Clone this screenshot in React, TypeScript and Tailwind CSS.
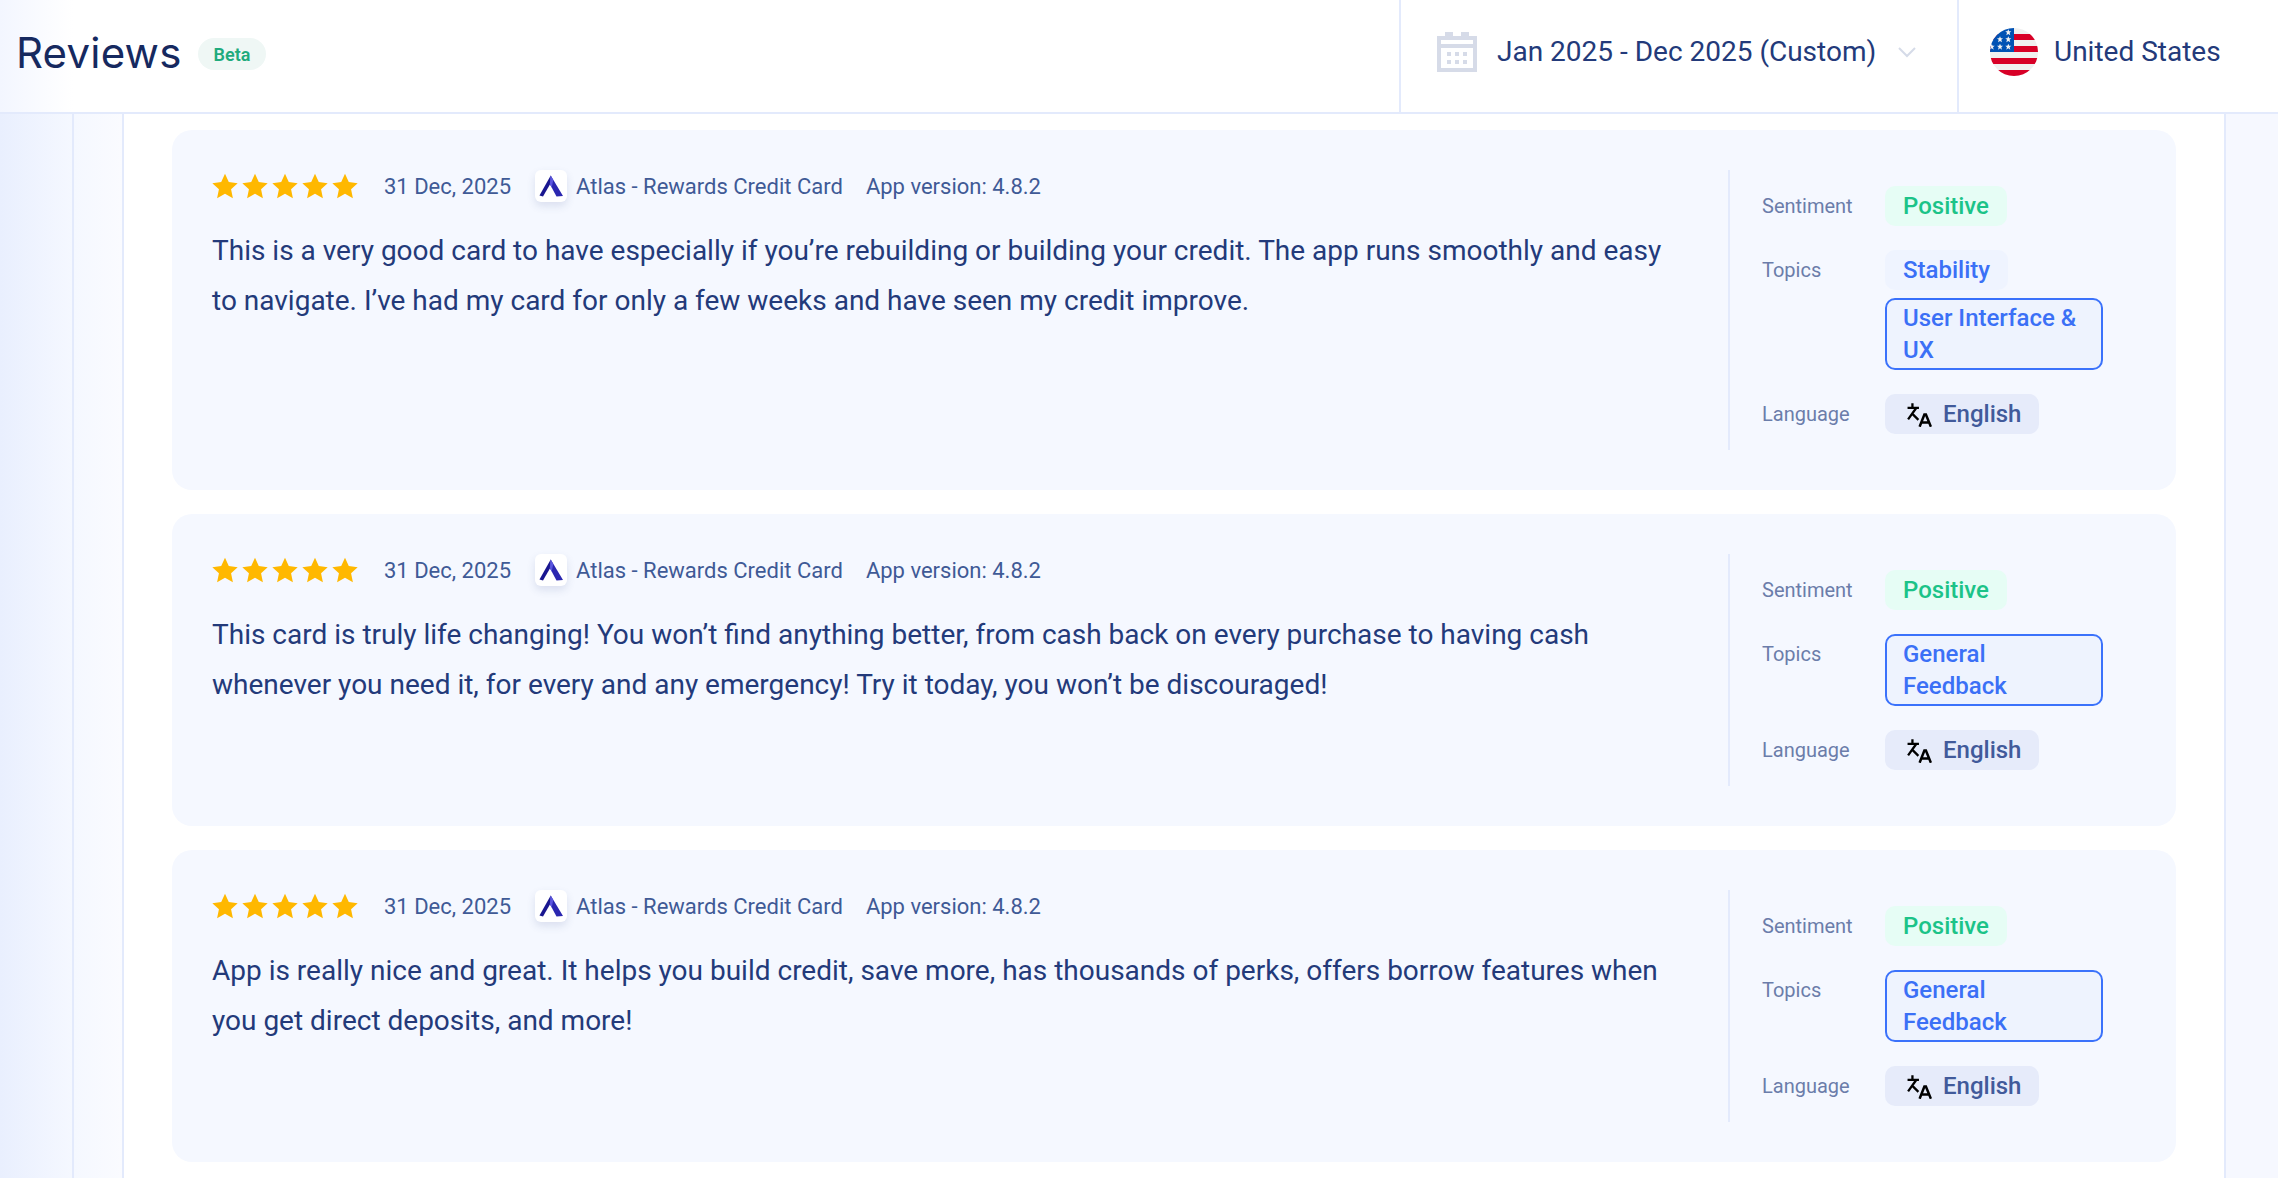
import React from "react";

function Star() {
  return (
    <svg viewBox="0 0 24 24" className="w-[26px] h-[26px]" fill="#ffb800">
      <path d="M12 .8l3.5 7.6 8.2 1-6.1 5.6 1.7 8.2L12 19.1l-7.3 4.1 1.7-8.2L.3 9.4l8.2-1z" />
    </svg>
  );
}

function Logo() {
  return (
    <div className="w-8 h-8 rounded-md bg-white shadow-[0_4px_8px_rgba(60,80,140,0.14)] flex items-center justify-center shrink-0">
      <svg viewBox="0 0 32 32" className="w-8 h-8">
        <path d="M15.7 5.5L28 26l-6.5.5L14.8 14z" fill="#2b27b0" />
        <path d="M15.7 5.5L4.5 25.5 8 26.5 15.2 14z" fill="#191690" />
        <path d="M15.7 5.5l2.6 4.4-1.6 7.6-1.9-3.5z" fill="#5a55e0" />
      </svg>
    </div>
  );
}

function TranslateIcon() {
  return (
    <svg viewBox="0 0 23 23" className="w-[25px] h-[25px] shrink-0 -ml-px -mr-px" fill="none" stroke="#000" strokeWidth="2.1">
      <path d="M5 1.2v3.6M.5 5.5H11M8.5 5.5L1 16M5.2 11.2l5.3 5.2" />
      <path d="M11.6 22.8L16 11.5h1.4L22 22.8M13.4 18.8h7" strokeWidth="2.3" />
    </svg>
  );
}

function CalendarIcon() {
  return (
    <svg viewBox="0 0 40 40" className="w-10 h-10" fill="#d6dbe8">
      <path
        fillRule="evenodd"
        d="M8 0h8v4h8V0h8v4h8v36H0V4h8zM4 8v4h32V8zM4 16v20h32V16z"
      />
      <rect x="10" y="20" width="4" height="4" />
      <rect x="18" y="20" width="4" height="4" />
      <rect x="26" y="20" width="4" height="4" />
      <rect x="10" y="28" width="4" height="4" />
      <rect x="18" y="28" width="4" height="4" />
      <rect x="26" y="28" width="4" height="4" />
    </svg>
  );
}

function Flag() {
  const stars: [number, number][] = [
    [18.3, 4.3], [10, 11.3], [18.3, 11.3], [1.7, 18.7], [10, 18.7], [18.3, 18.7],
  ];
  return (
    <svg viewBox="0 0 48 48" className="w-12 h-12 shrink-0">
      <defs>
        <clipPath id="flagClip">
          <circle cx="24" cy="24" r="24" />
        </clipPath>
      </defs>
      <g clipPath="url(#flagClip)">
        <rect width="48" height="48" fill="#f0f0f0" />
        <rect y="6" width="48" height="6" fill="#d80027" />
        <rect y="18" width="48" height="6" fill="#d80027" />
        <rect y="30" width="48" height="6" fill="#d80027" />
        <rect y="42" width="48" height="6" fill="#d80027" />
        <rect width="24" height="24" fill="#0052b4" />
        {stars.map(([x, y], i) => (
          <path
            key={i}
            transform={`translate(${x} ${y})`}
            d="M0-3l.9 2h2.1L1.3.5 2 3 0 1.6-2 3l.7-2.5L-3-1h2.100z"
            fill="#f0f0f0"
          />
        ))}
      </g>
    </svg>
  );
}

function Row({ label, children }: { label: string; children: React.ReactNode }) {
  return (
    <div className="flex items-start">
      <div className="w-[123px] h-10 flex items-center text-[20px] text-[#6b7daa] shrink-0">{label}</div>
      <div className="w-[218px] flex flex-col items-start gap-2">{children}</div>
    </div>
  );
}

function Topic({ text, active }: { text: string; active?: boolean }) {
  return active ? (
    <div className="w-[218px] border-2 border-[#3b72fb] rounded-[10px] bg-[#eef3fe] px-4 py-[2px] text-[24px] leading-8 font-medium text-[#3b70f6]">
      {text}
    </div>
  ) : (
    <div className="h-10 flex items-center rounded-[10px] bg-[#eff4ff] px-[18px] text-[24px] font-medium text-[#3b70f6]">
      {text}
    </div>
  );
}

function Card({ text, topics }: { text: string[]; topics: { text: string; active?: boolean }[] }) {
  return (
    <div className="rounded-[20px] bg-[#f5f8ff] p-10 flex">
      <div className="flex-1 min-w-0">
        <div className="flex items-center h-8 text-[#3f5a96] text-[22px]">
          <div className="flex gap-1 mr-[26px]">
            <Star /><Star /><Star /><Star /><Star />
          </div>
          <span>31 Dec, 2025</span>
          <div className="ml-6 mr-[9px]"><Logo /></div>
          <span>Atlas - Rewards Credit Card</span>
          <span className="ml-[23px]">App version: 4.8.2</span>
        </div>
        <div className="mt-6 text-[#233a7a] text-[28px] leading-[50px]">
          {text.map((t) => (
            <div key={t} className="whitespace-nowrap">{t}</div>
          ))}
        </div>
      </div>
      <div className="w-[408px] shrink-0 border-l-2 border-[#e3eafc] pl-8 py-4 flex flex-col gap-6">
        <Row label="Sentiment">
          <div className="h-10 flex items-center rounded-[10px] bg-[#e6fdf5] px-[18px] text-[24px] font-medium text-[#1cc388]">
            Positive
          </div>
        </Row>
        <Row label="Topics">
          {topics.map((t) => (
            <Topic key={t.text} {...t} />
          ))}
        </Row>
        <Row label="Language">
          <div className="h-10 w-[154px] flex items-center gap-3 rounded-[10px] bg-[#e6ebfa] pl-[23px] text-[24px] font-medium text-[#415a9a]">
            <TranslateIcon />
            English
          </div>
        </Row>
      </div>
    </div>
  );
}

export default function App() {
  return (
    <div className="w-[2278px] h-[1178px] overflow-hidden bg-white flex flex-col font-['Roboto',sans-serif]">
      <header className="h-[114px] shrink-0 border-b-2 border-[#e3eafc] flex bg-gradient-to-r from-[#f3f6ff] via-white via-[3.2%] to-white">
        <div className="flex-1 flex items-center pl-4 pb-2">
          <h1 className="font-['Inter',sans-serif] text-[42px] tracking-[0.2px] text-[#16295f] font-normal">Reviews</h1>
          <span className="ml-4 mt-[4px] h-8 px-4 rounded-full bg-[#eff7f5] text-[#1fab7d] text-[18px] font-semibold flex items-center">Beta</span>
        </div>
        <div className="w-[558px] shrink-0 border-l-2 border-[#e3eafc] flex items-center pl-9 pb-2">
          <CalendarIcon />
          <span className="ml-5 text-[28px] text-[#233a7a] whitespace-nowrap">Jan 2025 - Dec 2025 (Custom)</span>
          <svg viewBox="0 0 18 11" className="ml-[22px] w-[18px] h-[11px]" fill="none" stroke="#d5dbe8" strokeWidth="2">
            <path d="M1 1l8 8 8-8" />
          </svg>
        </div>
        <div className="w-[321px] shrink-0 border-l-2 border-[#e3eafc] flex items-center pl-[31px] pb-2">
          <Flag />
          <span className="ml-4 text-[28px] text-[#233a7a] whitespace-nowrap">United States</span>
        </div>
      </header>
      <div className="flex-1 min-h-0 flex">
        <div className="w-[74px] shrink-0 border-r-2 border-[#e3eafc] bg-gradient-to-r from-[#e9effe] to-[#f5f8ff]" />
        <div className="w-[50px] shrink-0 border-r-2 border-[#e3eafc] bg-gradient-to-r from-[#f5f8ff] to-[#fafbff]" />
        <main className="flex-1 min-w-0 flex flex-col gap-6 pt-4 pl-12 pr-[48px]">
          <Card
            text={[
              "This is a very good card to have especially if you’re rebuilding or building your credit. The app runs smoothly and easy",
              "to navigate. I’ve had my card for only a few weeks and have seen my credit improve.",
            ]}
            topics={[{ text: "Stability" }, { text: "User Interface & UX", active: true }]}
          />
          <Card
            text={[
              "This card is truly life changing! You won’t find anything better, from cash back on every purchase to having cash",
              "whenever you need it, for every and any emergency! Try it today, you won’t be discouraged!",
            ]}
            topics={[{ text: "General Feedback", active: true }]}
          />
          <Card
            text={[
              "App is really nice and great. It helps you build credit, save more, has thousands of perks, offers borrow features when",
              "you get direct deposits, and more!",
            ]}
            topics={[{ text: "General Feedback", active: true }]}
          />
        </main>
        <div className="w-[54px] shrink-0 border-l-2 border-[#e3eafc] bg-[#f6f8ff]" />
      </div>
    </div>
  );
}
